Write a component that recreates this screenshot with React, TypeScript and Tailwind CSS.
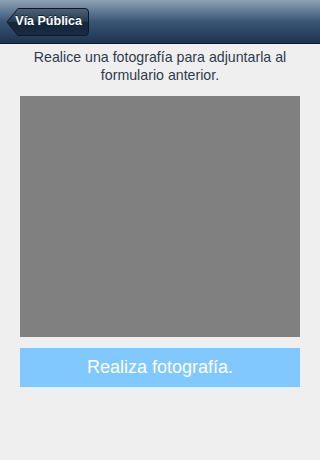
export default function App() {
  return (
    <div className="flex h-[460px] w-[320px] flex-col bg-[#efefef] font-['Liberation_Sans',Arial,sans-serif]">
      {/* nav bar */}
      <div className="flex h-[44px] items-center border-b border-b-[#0f1a28] bg-gradient-to-b from-[#8fa2b8] via-[#3b5675] via-50% to-[#1c3452] px-[6px]">
        <button className="relative flex h-[30px] w-[84px] items-center justify-end pr-[8px]">
          <svg className="absolute inset-0" width="84" height="30" viewBox="0 0 84 30">
            <defs>
              <linearGradient id="bk" x1="0" y1="0" x2="0" y2="1">
                <stop offset="0" stopColor="#4f6378" />
                <stop offset="0.5" stopColor="#243850" />
                <stop offset="0.51" stopColor="#14253a" />
                <stop offset="1" stopColor="#1a2c42" />
              </linearGradient>
            </defs>
            <path
              d="M1 15 L12 1.5 H79 Q82.5 1.5 82.5 5 V25 Q82.5 28.5 79 28.5 H12 Z"
              fill="url(#bk)"
              stroke="#0d1824"
              strokeWidth="1"
            />
          </svg>
          <span className="relative text-[12.5px] font-bold text-white [text-shadow:0_-1px_0_rgba(0,0,0,0.6)]">
            Vía Pública
          </span>
        </button>
      </div>

      <p className="mt-[4px] px-[16px] text-center text-[14.2px] leading-[18px] text-[#2f3b4c]">
        Realice una fotografía para adjuntarla al formulario anterior.
      </p>

      <div className="mx-[20px] mt-[12px] h-[241px] bg-[#808080]" />

      <button className="mx-[20px] mt-[11px] flex h-[39px] items-center justify-center bg-[#80c8ff] text-[18px] text-white">
        Realiza fotografía.
      </button>
    </div>
  );
}
